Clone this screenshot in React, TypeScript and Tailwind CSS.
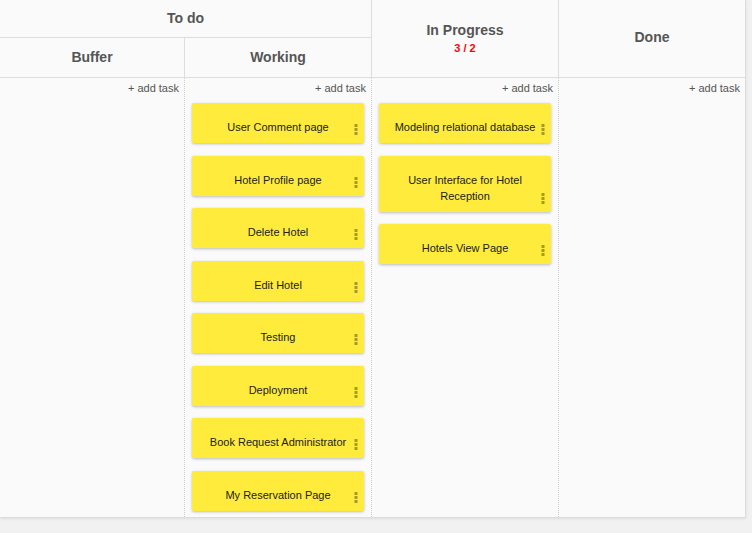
import React from 'react';

type Task = { id: number; title: string };

const working: Task[] = [
    { id: 1, title: 'User Comment page' },
    { id: 2, title: 'Hotel Profile page' },
    { id: 3, title: 'Delete Hotel' },
    { id: 4, title: 'Edit Hotel' },
    { id: 5, title: 'Testing' },
    { id: 6, title: 'Deployment' },
    { id: 7, title: 'Book Request Administrator' },
    { id: 8, title: 'My Reservation Page' },
];

const inProgress: Task[] = [
    { id: 9, title: 'Modeling relational database' },
    { id: 10, title: 'User Interface for Hotel Reception' },
    { id: 11, title: 'Hotels View Page' },
];

const Dots = () => (
    <svg width="4" height="11" viewBox="0 0 4 11" className="absolute right-[6px] bottom-[8px]">
        <rect x="0.5" y="0" width="3" height="3" fill="rgba(0,0,0,0.35)" />
        <rect x="0.5" y="4" width="3" height="3" fill="rgba(0,0,0,0.35)" />
        <rect x="0.5" y="8" width="3" height="3" fill="rgba(0,0,0,0.35)" />
    </svg>
);

const Card = ({ task }: { task: Task }) => (
    <div className="relative bg-[#ffeb3b] rounded-[2px] shadow-[0_1px_3px_rgba(0,0,0,0.25)] pt-4 pb-2 px-[6px] text-center text-[11px] leading-4 text-[#222]">
        <div className="px-[8px]">{task.title}</div>
        <Dots />
    </div>
);

const Column = ({ tasks, width, last }: { tasks: Task[]; width: string; last?: boolean }) => (
    <div className={`${width} shrink-0 flex flex-col ${last ? 'border-r border-[#ddd]' : 'border-r border-dotted border-[#ccc]'}`}>
        <div className="h-[25px] pr-[5px] pt-[2px] text-right text-[11px] leading-4 text-[#555]">+ add task</div>
        <div className="flex flex-col gap-[12.5px] px-[7px]">
            {tasks.map((t) => (
                <Card key={t.id} task={t} />
            ))}
        </div>
    </div>
);

const App = () => {
    return (
        <div className="w-[752px] h-[533px] bg-[#f1f1f1] overflow-hidden" style={{ fontFamily: '"Liberation Sans", Arial, sans-serif' }}>
            <div className="w-[746px] h-[518px] bg-[#fafafa] border-b border-[#ddd] shadow-[0_1px_3px_rgba(0,0,0,0.08)] flex flex-col">
                <div className="flex h-[78px] border-b border-[#ddd] text-[14px] font-bold text-[#555]">
                    <div className="w-[372px] shrink-0 flex flex-col border-r border-[#ddd]">
                        <div className="h-[38px] border-b border-[#ddd] flex items-center justify-center">To do</div>
                        <div className="flex flex-1">
                            <div className="w-[185px] border-r border-[#ddd] flex items-center justify-center">Buffer</div>
                            <div className="flex-1 flex items-center justify-center">Working</div>
                        </div>
                    </div>
                    <div className="w-[187px] shrink-0 border-r border-[#ddd] flex flex-col items-center justify-center pb-[2px]">
                        <div className="leading-5">In Progress</div>
                        <div className="text-[11px] leading-4 text-[#f00]">3 / 2</div>
                    </div>
                    <div className="w-[187px] shrink-0 border-r border-[#ddd] flex items-center justify-center pb-[2px]">Done</div>
                </div>
                <div className="flex flex-1">
                    <Column tasks={[]} width="w-[185px]" />
                    <Column tasks={working} width="w-[187px]" />
                    <Column tasks={inProgress} width="w-[187px]" />
                    <Column tasks={[]} width="w-[187px]" last />
                </div>
            </div>
        </div>
    );
};

export default App;
